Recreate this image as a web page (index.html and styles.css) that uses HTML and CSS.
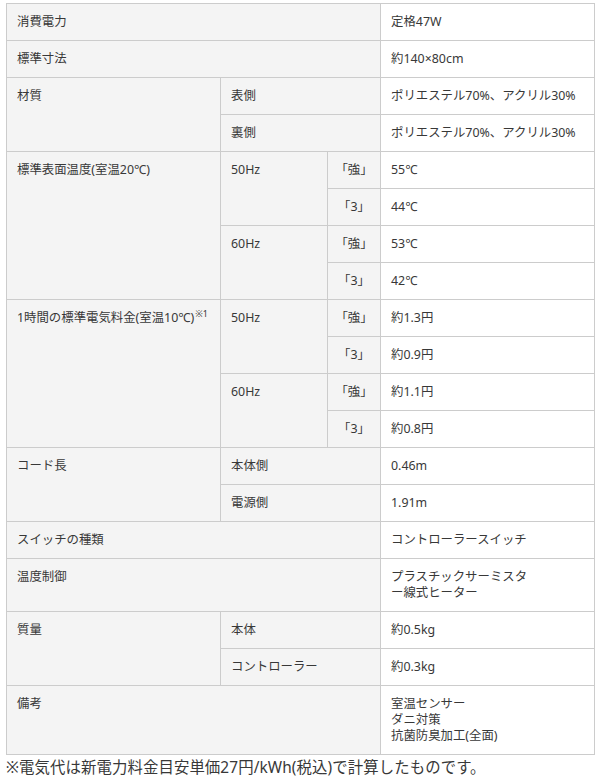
FILE: index.html
```html
<!DOCTYPE html>
<html lang="ja">
<head>
<meta charset="utf-8">
<title>仕様</title>
<link rel="stylesheet" href="styles.css">
</head>
<body>
<div class="page">
<table class="spec">
<colgroup>
<col class="c1"><col class="c2"><col class="c3"><col class="c4">
</colgroup>
<tbody>
<tr><th colspan="3">消費電力</th><td>定格47W</td></tr>
<tr><th colspan="3">標準寸法</th><td>約140×80cm</td></tr>
<tr><th rowspan="2">材質</th><th colspan="2">表側</th><td>ポリエステル70%、アクリル30%</td></tr>
<tr><th colspan="2">裏側</th><td>ポリエステル70%、アクリル30%</td></tr>
<tr><th rowspan="4">標準表面温度(室温20℃)</th><th rowspan="2">50Hz</th><th class="mode">「強」</th><td>55℃</td></tr>
<tr><th class="mode">「3」</th><td>44℃</td></tr>
<tr><th rowspan="2">60Hz</th><th class="mode">「強」</th><td>53℃</td></tr>
<tr><th class="mode">「3」</th><td>42℃</td></tr>
<tr><th rowspan="4">1時間の標準電気料金(室温10℃)<sup>※1</sup></th><th rowspan="2">50Hz</th><th class="mode">「強」</th><td>約1.3円</td></tr>
<tr><th class="mode">「3」</th><td>約0.9円</td></tr>
<tr><th rowspan="2">60Hz</th><th class="mode">「強」</th><td>約1.1円</td></tr>
<tr><th class="mode">「3」</th><td>約0.8円</td></tr>
<tr><th rowspan="2">コード長</th><th colspan="2">本体側</th><td>0.46m</td></tr>
<tr><th colspan="2">電源側</th><td>1.91m</td></tr>
<tr><th colspan="3">スイッチの種類</th><td>コントローラースイッチ</td></tr>
<tr><th colspan="3">温度制御</th><td>プラスチックサーミスタ<br>ー線式ヒーター</td></tr>
<tr><th rowspan="2">質量</th><th colspan="2">本体</th><td>約0.5kg</td></tr>
<tr><th colspan="2">コントローラー</th><td>約0.3kg</td></tr>
<tr><th colspan="3">備考</th><td>室温センサー<br>ダニ対策<br>抗菌防臭加工(全面)</td></tr>
</tbody>
</table>
<p class="note">※電気代は新電力料金目安単価27円/kWh(税込)で計算したものです。</p>
</div>
</body>
</html>
```
FILE: styles.css
```css
html, body {
  margin: 0;
  padding: 0;
  background: #fff;
}
.page {
  padding: 3px 6px 0 6px;
  font-family: "Noto Sans", "Noto Sans CJK JP", sans-serif;
  color: #383838;
}
.spec {
  width: 588px;
  border-collapse: collapse;
  table-layout: fixed;
  font-size: 12.4px;
  line-height: 16px;
}
.c1 { width: 214px; }
.c2 { width: 107px; }
.c3 { width: 53px; }
.c4 { width: 214px; }
.spec th, .spec td {
  border: 1px solid #cccccc;
  padding: 10px 10px;
  text-align: left;
  vertical-align: top;
  font-weight: normal;
}
.spec th {
  background: #f4f4f4;
}
.spec td {
  background: #fff;
}
.spec th.mode {
  text-align: center;
  padding-left: 2px;
  padding-right: 2px;
}
.spec sup {
  font-size: 9px;
  line-height: 0;
  vertical-align: 5px;
  margin-left: 1px;
}
.note {
  margin: 2px 0 0 0;
  font-size: 15.4px;
  line-height: 22px;
  letter-spacing: 0.1px;
}
```
